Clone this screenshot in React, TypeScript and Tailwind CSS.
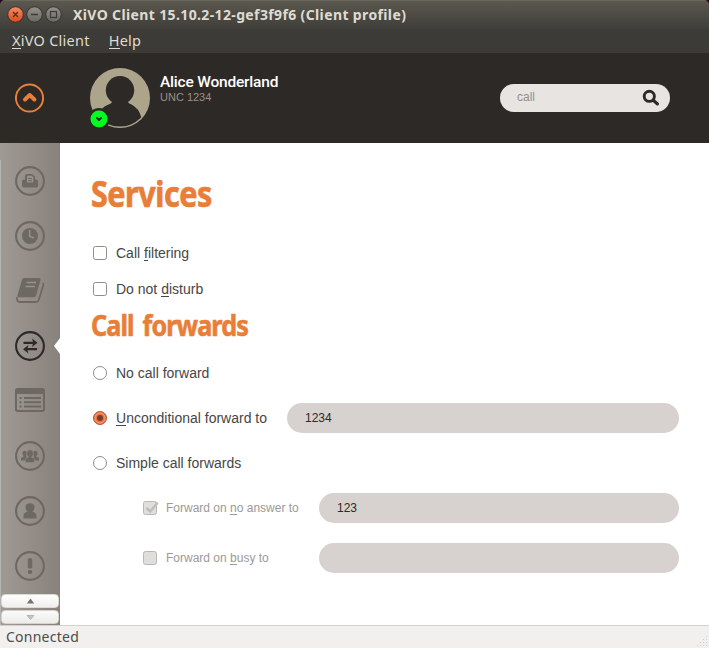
import type { ReactNode } from "react";

const SANS = "font-['Liberation_Sans',Arial,sans-serif]";
const UBUNTU = "font-['Noto_Sans',sans-serif]";

function Key({ children }: { children: ReactNode }) {
  return <span className="inline-block border-b border-current leading-[14px]">{children}</span>;
}

function MenuKey({ children }: { children: ReactNode }) {
  return <span className="inline-block border-b border-current leading-[16px]">{children}</span>;
}

function WindowButtons() {
  return (
    <svg width="56" height="20" viewBox="0 0 56 20" className="ml-[6px] shrink-0">
      <defs>
        <linearGradient id="close" x1="0" y1="0" x2="0" y2="1">
          <stop offset="0" stopColor="#f58d68" />
          <stop offset="1" stopColor="#df4a16" />
        </linearGradient>
        <linearGradient id="grey" x1="0" y1="0" x2="0" y2="1">
          <stop offset="0" stopColor="#93918a" />
          <stop offset="1" stopColor="#696861" />
        </linearGradient>
      </defs>
      <circle cx="9.500" cy="9.500" r="7.800" fill="url(#close)" stroke="#33322e" />
      <circle cx="28.500" cy="9.500" r="7.800" fill="url(#grey)" stroke="#33322e" />
      <circle cx="47.500" cy="9.500" r="7.800" fill="url(#grey)" stroke="#33322e" />
      <path d="M7 7l5 5M12 7l-5 5" stroke="#5c2a16" strokeWidth="1.300" />
      <path d="M25 9.500h7" stroke="#3c3b37" strokeWidth="1.300" />
      <rect x="44.500" y="6.500" width="6" height="6" fill="none" stroke="#3c3b37" strokeWidth="1.200" />
    </svg>
  );
}

function Ring({ children, active = false }: { children: ReactNode; active?: boolean }) {
  return (
    <svg width="30" height="30" viewBox="0 0 30 30" className={active ? "text-[#2d2926]" : "text-[#6d6862]"} fill="currentColor">
      <circle cx="15" cy="15" r="13.900" fill="none" stroke="currentColor" strokeWidth="2.100" />
      {children}
    </svg>
  );
}

function Sidebar() {
  return (
    <nav className="relative flex w-[60px] shrink-0 flex-col items-center bg-linear-to-r from-[#a09a94] to-[#89827c] pt-[23px]">
      <div className="absolute top-[17px] left-0 h-[465px] w-px bg-[#b4b4b2]" />
      <div className="flex flex-col gap-[25px]">
        <Ring>
          <path d="M10 13.500V10q0-2 2-2h5l3 2.500v3h1.500q1.500.500 1.500 2v4.300q0 1.700-1.700 1.700H8.700Q7 21.500 7 19.800v-4.300q0-1.500 1.500-2z" />
          <path d="M12 9.700h4.700l1.500 1.500v5.300H12z" fill="#99938d" />
          <path d="M13 12.400h4M13 14.700h4" stroke="currentColor" />
        </Ring>
        <Ring>
          <circle cx="15" cy="15" r="8" />
          <path d="M14.700 9v6.500l4.300 1.500" fill="none" stroke="#958f89" strokeWidth="1.600" />
        </Ring>
        <svg width="30" height="30" viewBox="0 0 30 30" fill="none" className="text-[#6d6862]">
          <path d="M9 2h15q2 0 1.500 2l-4.300 15.500q-.5 1.700-2.200 1.700H4q-2 0-1.500-2L7 3.700Q7.500 2 9 2z" fill="currentColor" />
          <path d="M2 21q-.5 5 3 5h16.200q1.800 0 2.400-1.800L28.300 9.500q.3-1.500-.6-2.500" stroke="currentColor" strokeWidth="1.800" />
          <path d="M11.500 6.500H21M10.500 10.500H20" stroke="#99938d" strokeWidth="1.500" />
        </svg>
        <Ring active>
          <path d="M8.500 11.800H20M22 18.200H10" stroke="currentColor" strokeWidth="2.200" />
          <path d="M17 7.500l5.500 4.300-5.500 4.300 1.300-4.300zM13.500 14l-5.500 4.200 5.500 4.300-1.300-4.300z" />
        </Ring>
        <svg width="30" height="30" viewBox="0 0 30 30" fill="none" stroke="#6d6862">
          <rect x="1" y="3" width="28" height="22" rx="1.700" strokeWidth="2" />
          <path d="M1 5.500h28" strokeWidth="5" />
          <path d="M4.500 12h2M9 12h17M4.500 16.200h2M9 16.200h17M4.500 20.500h2M9 20.500h17" strokeWidth="2" />
        </svg>
        <Ring>
          <ellipse cx="9.700" cy="12.500" rx="2.200" ry="2.800" />
          <path d="M6 19.500v-2q0-1.300 2-1.500l1-1h2l1 2v2.500z" />
          <ellipse cx="20.300" cy="12.500" rx="2.200" ry="2.800" />
          <path d="M24 19.500v-2q0-1.300-2-1.500l-1-1h-2l-1 2v2.500z" />
          <path stroke="#938d87" strokeWidth=".6" d="M10.500 21.500v-3q0-1.600 3-2.300-1.800-1.400-1.800-3.700 0-3.700 3.300-3.700t3.300 3.700q0 2.300-1.800 3.700 3 .7 3 2.300v3z" />
        </Ring>
        <Ring>
          <path d="M8.500 22.500v-3q0-2.200 2-3l2-1q-2-1.700-2-4.200 0-4 4.500-4t4.500 4q0 2.500-2 4.200l2 1q2 .8 2 3v3z" />
        </Ring>
        <Ring>
          <rect x="12.800" y="7.300" width="4.500" height="10.300" rx="1.500" />
          <rect x="12.800" y="19" width="4.500" height="4" rx="1.900" />
        </Ring>
      </div>
      <svg width="6" height="16" viewBox="0 0 6 16" className="absolute top-[195px] right-0">
        <path d="M6 0v16L0 8z" fill="#fff" />
      </svg>
      <div className="mt-[13px] ml-px flex w-[58px] flex-col gap-[2px] self-start">
        <div className="flex h-[14px] items-center justify-center rounded-[4px] border border-[#dcdad7] bg-linear-to-b from-white to-[#f0efed]">
          <svg width="9" height="6" viewBox="0 0 9 6"><path d="M4.500.5l3.700 5H.8z" fill="#777570" /></svg>
        </div>
        <div className="flex h-[14px] items-center justify-center rounded-[4px] border border-[#d5d2ce] bg-linear-to-b from-[#fafafa] to-[#ececea]">
          <svg width="9" height="5" viewBox="0 0 9 5"><path d="M1 .5h7L4.500 4.500z" fill="#c7c5c1" stroke="#a8a6a1" strokeWidth=".7" /></svg>
        </div>
      </div>
    </nav>
  );
}

function Check({ disabled = false, checked = false }: { disabled?: boolean; checked?: boolean }) {
  return (
    <svg width="16" height="16" viewBox="0 0 16 16" className="shrink-0">
      <rect x=".5" y="1.500" width="13" height="13" rx="2" fill={disabled ? "#dfdedd" : "#fff"} stroke={disabled ? "#bab8b4" : "#908d87"} />
      {checked && <path d="M3.500 8l3.700 3.500 7.500-9" fill="none" stroke="#bfbdb9" strokeWidth="2.500" />}
    </svg>
  );
}

function Radio({ checked = false }: { checked?: boolean }) {
  return (
    <svg width="16" height="16" viewBox="0 0 16 16" className="shrink-0">
      <circle cx="7" cy="8" r="6.500" fill={checked ? "#ee7144" : "#fff"} stroke={checked ? "#b9532f" : "#908d87"} />
      {checked && <circle cx="7" cy="8" r="5" fill="none" stroke="#f6a080" strokeWidth=".9" />}
      {checked && <circle cx="7" cy="8" r="3" fill="#74402b" />}
    </svg>
  );
}

function Row({ control, children }: { control: ReactNode; children: ReactNode }) {
  return (
    <label className="flex h-[30px] items-center pl-[33px] text-[14px] text-[#464646]">
      {control}
      <span className="ml-[7px] whitespace-pre">{children}</span>
    </label>
  );
}

function SubRow({ control, children, value = "" }: { control: ReactNode; children: ReactNode; value?: string }) {
  return (
    <div className="flex h-[30px] items-center pr-[30px] pl-[83px] text-[12px] text-[#9b9a98]">
      {control}
      <span className="ml-[7px] w-[153px] whitespace-pre [&>span]:leading-[12px]">{children}</span>
      <div className="flex h-[30px] flex-1 items-center rounded-full bg-[#d7d2cf] pl-[18px] text-[#2d2926]">{value}</div>
    </div>
  );
}

function Content() {
  return (
    <main className="min-w-0 flex-1 bg-white">
      <h1 className={`${UBUNTU} mt-[26px] ml-[31px] h-[50px] w-max origin-left scale-x-[0.85] text-[36px] leading-[50px] font-bold tracking-[-0.600px] text-[#e87e37] [-webkit-text-stroke:0.700px_#e87e37]`}>Services</h1>
      <div className="mt-[19px] flex flex-col gap-[6px]">
        <Row control={<Check />}>Call <Key>f</Key>iltering</Row>
        <Row control={<Check />}>Do not <Key>d</Key>isturb</Row>
      </div>
      <h2 className={`${UBUNTU} mt-[1px] ml-[31px] h-[41px] w-max origin-left scale-x-[0.87] text-[29px] leading-[40px] font-bold tracking-[-1.100px] [word-spacing:4px] text-[#e87e37] [-webkit-text-stroke:0.600px_#e87e37]`}>Call forwards</h2>
      <div className="mt-[12px] flex flex-col gap-[15px]">
        <Row control={<Radio />}>No call forward</Row>
        <div className="flex items-center pr-[30px]">
          <div className="w-[227px]"><Row control={<Radio checked />}><Key>U</Key>nconditional forward to</Row></div>
          <div className="flex h-[30px] flex-1 items-center rounded-full bg-[#d7d2cf] pl-[18px] text-[12px] text-[#2d2926]">1234</div>
        </div>
        <Row control={<Radio />}>Simple call forwards</Row>
        <div className="flex flex-col gap-[20px]">
          <SubRow control={<Check disabled checked />} value="123">Forward on <Key>n</Key>o answer to</SubRow>
          <SubRow control={<Check disabled />}>Forward on <Key>b</Key>usy to</SubRow>
        </div>
      </div>
    </main>
  );
}

export default function App() {
  return (
    <div className="bg-[#26041b]">
      <div className={`${SANS} flex h-[648px] w-[709px] flex-col overflow-hidden rounded-t-[5px] bg-[#3c3b37]`}>
        <div className={`${UBUNTU} flex h-[29px] items-center border-t border-[#6a675f] bg-linear-to-b from-[#5b584f] to-[#3f3e39]`}>
          <WindowButtons />
          <span className="ml-[11px] pb-[2px] text-[14px] font-bold tracking-[0.370px] whitespace-nowrap text-[#dfdbd2]">XiVO Client 15.10.2-12-gef3f9f6 (Client profile)</span>
        </div>
        <div className={`${UBUNTU} flex h-[24px] gap-[19px] pl-[12px] text-[14.500px] leading-[22px] tracking-[0.250px] text-[#dfdbd2]`}>
          <span><MenuKey>X</MenuKey>iVO Client</span>
          <span><MenuKey>H</MenuKey>elp</span>
        </div>
        <header className="flex h-[90px] shrink-0 items-center bg-[#2d2926]">
          <svg width="30" height="30" viewBox="0 0 30 30" className="ml-[15px] shrink-0">
            <circle cx="14.500" cy="15" r="13.600" fill="none" stroke="#e87e37" strokeWidth="2" />
            <path d="M10 16.500l4.700-4.500 4.700 4.500" fill="none" stroke="#e87e37" strokeWidth="4" strokeLinecap="round" strokeLinejoin="round" />
          </svg>
          <svg width="60" height="60" viewBox="0 0 60 60" className="ml-[45px] shrink-0">
            <defs><clipPath id="portrait"><circle cx="30" cy="30" r="28.600" /></clipPath></defs>
            <circle cx="30" cy="30" r="30" fill="#aca58c" />
            <g clipPath="url(#portrait)" fill="#2d2926">
              <circle cx="30" cy="22.300" r="14.200" />
              <path d="M22 33h16q0 2.500 3 3.300Q49 40 51.500 50 44 59 30 59T8 49q2-9.500 11-12.700 3-.8 3-3.300z" />
            </g>
            <circle cx="9" cy="51" r="11" fill="#2d2926" />
            <circle cx="9" cy="51" r="8.500" fill="#00ff1e" />
            <path d="M7 50l2 2 2-2" fill="none" stroke="#2d2926" strokeWidth="2" strokeLinecap="round" strokeLinejoin="round" />
          </svg>
          <div className="ml-[10px] h-[54px] w-[340px]">
            <div className="mt-[3px] h-[17px] w-max text-[15.500px] leading-[17px] font-medium tracking-[-0.200px] text-white font-['Roboto',sans-serif]">Alice Wonderland</div>
            <div className="text-[11px] leading-[12px] text-[#999087]">UNC 1234</div>
          </div>
          <div className="flex h-[28px] w-[170px] items-center justify-between rounded-full bg-[#e8e4e1] pr-[10px] pl-[17px] text-[12px] text-[#938f8a]">
            <span className="pb-[2px]">call</span>
            <svg width="18" height="18" viewBox="0 0 18 18" fill="none" stroke="#2d2926">
              <circle cx="7.300" cy="7.300" r="5.100" strokeWidth="2.900" />
              <path d="M11.500 11.500l4 3.500" strokeWidth="3" strokeLinecap="round" />
            </svg>
          </div>
        </header>
        <div className="flex h-[482px] shrink-0">
          <Sidebar />
          <Content />
        </div>
        <footer className={`${UBUNTU} flex h-[23px] shrink-0 items-center justify-between border-t border-[#d4d1ce] bg-[#f1f0ee] pl-[6px] text-[14px] tracking-[0.250px] text-[#4c4c4c]`}>
          <span className="pb-[2px]">Connected</span>
          <svg width="12" height="12" viewBox="0 0 12 12" className="self-end" fill="#cfcdca">
            <path d="M9 0h1v1H9zM6 3h1v1H6zM9 3h1v1H9zM3 6h1v1H3zM6 6h1v1H6zM9 6h1v1H9zM0 9h1v1H0zM3 9h1v1H3zM6 9h1v1H6zM9 9h1v1H9z" />
          </svg>
        </footer>
      </div>
    </div>
  );
}
